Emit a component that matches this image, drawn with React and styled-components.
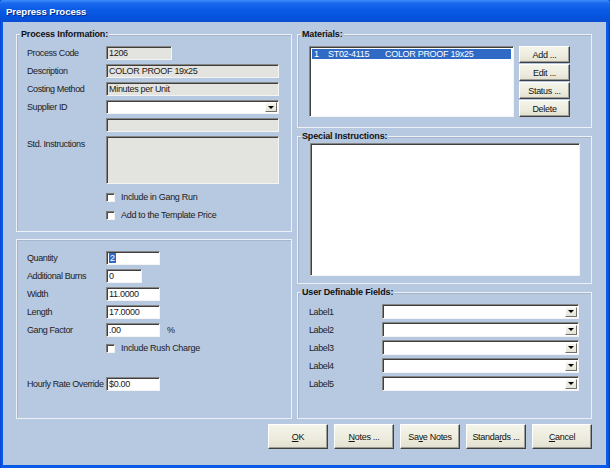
import React from 'react';
import styled, { createGlobalStyle } from 'styled-components';

const GlobalStyle = createGlobalStyle`
  html, body {
    margin: 0;
    padding: 0;
    background: #ffffff;
  }
  body {
    font-family: "Liberation Sans", Arial, sans-serif;
  }
`;

const Window = styled.div`
  width: 610px;
  height: 468px;
  display: flex;
  flex-direction: column;
  background: linear-gradient(90deg, #0842d0 0%, #0a5ae8 2px, #0a5ae8 calc(100% - 2px), #0638b8 100%);
  box-sizing: border-box;
  overflow: hidden;
`;

const TitleBar = styled.div`
  height: 22px;
  flex: none;
  display: flex;
  align-items: center;
  padding-left: 6px;
  background: linear-gradient(180deg, #3d8ef8 0%, #1a68ee 15%, #0a5ae6 45%, #0553dc 80%, #0a4fd2 100%);
  border-radius: 3px 3px 0 0;
`;

const Title = styled.span`
  color: #ffffff;
  font-weight: bold;
  font-size: 9.6px;
  letter-spacing: -0.05px;
  text-shadow: 1px 1px 0 #0a2a88;
`;

const Body = styled.div`
  flex: 1;
  margin: 0 4px 3px 3px;
  padding: 12px 14px 0 13px;
  background: #b7c8e1;
  display: flex;
  flex-direction: column;
`;

const Columns = styled.div`
  display: flex;
  gap: 5px;
`;

const Column = styled.div`
  width: ${(p) => p.$width}px;
  display: flex;
  flex-direction: column;
  gap: ${(p) => p.$gap}px;
`;

const Group = styled.div`
  position: relative;
  height: ${(p) => p.$height}px;
  box-sizing: border-box;
  border: 1px solid #edf0f4;
  box-shadow: inset 1px 1px 0 #a6b5cc;
  padding: ${(p) => p.$pad || '11px 12px 0 10px'};
`;

const Legend = styled.span`
  position: absolute;
  top: -6px;
  left: 3px;
  padding: 0 1px;
  background: #b7c8e1;
  font-size: 9px;
  line-height: 11px;
  font-weight: bold;
  letter-spacing: -0.15px;
  color: #111;
`;

const Rows = styled.div`
  display: flex;
  flex-direction: column;
  gap: ${(p) => p.$gap || 4}px;
`;

const Row = styled.div`
  display: flex;
  align-items: ${(p) => (p.$top ? 'flex-start' : 'center')};
  height: ${(p) => p.$h || 14}px;
  margin-top: ${(p) => p.$mt || 0}px;
`;

const Label = styled.span`
  width: ${(p) => p.$w || 79}px;
  flex: none;
  font-size: 9px;
  letter-spacing: -0.4px;
  color: #222;
  white-space: nowrap;
  padding-top: ${(p) => (p.$top ? 3 : 0)}px;
`;

const Field = styled.div`
  box-sizing: border-box;
  width: ${(p) => (p.$w ? `${p.$w}px` : 'auto')};
  flex: ${(p) => (p.$w ? 'none' : '1')};
  height: ${(p) => p.$h || 14}px;
  background: ${(p) => (p.$disabled ? '#e3e3df' : '#ffffff')};
  border-top: 1px solid #868686;
  border-left: 1px solid #868686;
  border-bottom: 1px solid #f4f4f4;
  border-right: 1px solid #f4f4f4;
  box-shadow: inset 1px 1px 0 #3f3f3f;
  display: flex;
  align-items: ${(p) => (p.$multi ? 'flex-start' : 'center')};
  padding-left: 2px;
  font-size: 9px;
  letter-spacing: -0.3px;
  color: #1a1a1a;
  white-space: nowrap;
  overflow: hidden;
`;

const Selected = styled.span`
  background: #316ac5;
  color: #ffffff;
  padding: 0 1px;
`;

const DropButton = styled.div`
  margin-left: auto;
  width: 12px;
  height: 10px;
  flex: none;
  margin-right: 1px;
  box-sizing: border-box;
  background: linear-gradient(180deg, #f6f5ee 0%, #e6e4d6 100%);
  border-top: 1px solid #ffffff;
  border-left: 1px solid #ffffff;
  border-right: 1px solid #6f6f6f;
  border-bottom: 1px solid #6f6f6f;
  display: flex;
  align-items: center;
  justify-content: center;
`;

const Arrow = styled.div`
  width: 0;
  height: 0;
  border-left: 3px solid transparent;
  border-right: 3px solid transparent;
  border-top: 3px solid #000;
`;

const CheckRow = styled.label`
  display: flex;
  align-items: center;
  gap: 6px;
  margin-left: 79px;
  height: 14px;
  margin-top: ${(p) => p.$mt || 0}px;
  font-size: 9px;
  letter-spacing: -0.3px;
  color: #222;
`;

const CheckBox = styled.span`
  width: 9px;
  height: 9px;
  box-sizing: border-box;
  background: #ffffff;
  border-top: 1px solid #7a7a7a;
  border-left: 1px solid #7a7a7a;
  border-bottom: 1px solid #f2f2f2;
  border-right: 1px solid #f2f2f2;
  box-shadow: inset 1px 1px 0 #4a4a4a;
`;

const Suffix = styled.span`
  margin-left: 7px;
  font-size: 9px;
  color: #222;
`;

const Spacer = styled.div`
  height: ${(p) => p.$h}px;
`;

const MaterialsBody = styled.div`
  display: flex;
  gap: 5px;
`;

const ListBox = styled.div`
  width: 205px;
  height: 71px;
  box-sizing: border-box;
  background: #ffffff;
  border-top: 1px solid #868686;
  border-left: 1px solid #868686;
  border-bottom: 1px solid #f4f4f4;
  border-right: 1px solid #f4f4f4;
  box-shadow: inset 1px 1px 0 #3f3f3f;
  padding: 2px 2px 0 2px;
`;

const ListRow = styled.div`
  height: 10px;
  display: flex;
  align-items: center;
  background: ${(p) => (p.$selected ? '#316ac5' : 'transparent')};
  color: ${(p) => (p.$selected ? '#ffffff' : '#1a1a1a')};
  font-size: 9px;
  letter-spacing: -0.3px;
  white-space: nowrap;
`;

const Cell = styled.span`
  width: ${(p) => p.$w}px;
  flex: none;
  padding-left: ${(p) => p.$pl || 0}px;
`;

const SideButtons = styled.div`
  display: flex;
  flex-direction: column;
  gap: 1px;
`;

const Button = styled.button`
  box-sizing: border-box;
  width: ${(p) => p.$w}px;
  height: ${(p) => p.$h}px;
  padding: 0;
  margin: 0;
  background: linear-gradient(180deg, #f5f4ea 0%, #ecebdd 60%, #e2e0d0 100%);
  border-top: 1px solid #ffffff;
  border-left: 1px solid #ffffff;
  border-right: 1px solid #404040;
  border-bottom: 1px solid #404040;
  box-shadow: inset -1px -1px 0 #9d9d96;
  font-family: "Liberation Sans", Arial, sans-serif;
  font-size: 9px;
  letter-spacing: -0.3px;
  color: #111;
  cursor: default;
`;

const TextArea = styled.div`
  box-sizing: border-box;
  height: 133px;
  background: #ffffff;
  border-top: 1px solid #868686;
  border-left: 1px solid #868686;
  border-bottom: 1px solid #f4f4f4;
  border-right: 1px solid #f4f4f4;
  box-shadow: inset 1px 1px 0 #3f3f3f;
`;

const ButtonBar = styled.div`
  display: flex;
  justify-content: flex-end;
  gap: 6px;
  margin-top: 5px;
`;

function Combo({ w, h }) {
  return (
    <Field $w={w} $h={h}>
      <DropButton>
        <Arrow />
      </DropButton>
    </Field>
  );
}

const udfLabels = ['Label1', 'Label2', 'Label3', 'Label4', 'Label5'];

export default function App() {
  return (
    <>
      <GlobalStyle />
      <Window>
        <TitleBar>
          <Title>Prepress Process</Title>
        </TitleBar>
        <Body>
          <Columns>
            <Column $width={276} $gap={7}>
              <Group $height={198}>
                <Legend>Process Information:</Legend>
                <Rows>
                  <Row>
                    <Label>Process Code</Label>
                    <Field $w={66} $disabled>1206</Field>
                  </Row>
                  <Row>
                    <Label>Description</Label>
                    <Field $disabled>COLOR PROOF 19x25</Field>
                  </Row>
                  <Row>
                    <Label>Costing Method</Label>
                    <Field $disabled>Minutes per Unit</Field>
                  </Row>
                  <Row>
                    <Label>Supplier ID</Label>
                    <Combo />
                  </Row>
                  <Row>
                    <Label />
                    <Field $disabled />
                  </Row>
                  <Row $h={48} $top>
                    <Label $top>Std. Instructions</Label>
                    <Field $disabled $multi $h={48} />
                  </Row>
                  <CheckRow $mt={2}>
                    <CheckBox />
                    Include in Gang Run
                  </CheckRow>
                  <CheckRow>
                    <CheckBox />
                    Add to the Template Price
                  </CheckRow>
                </Rows>
              </Group>
              <Group $height={180}>
                <Rows>
                  <Row>
                    <Label>Quantity</Label>
                    <Field $w={54}>
                      <Selected>2</Selected>
                    </Field>
                  </Row>
                  <Row>
                    <Label>Additional Burns</Label>
                    <Field $w={36}>0</Field>
                  </Row>
                  <Row>
                    <Label>Width</Label>
                    <Field $w={54}>11.0000</Field>
                  </Row>
                  <Row>
                    <Label>Length</Label>
                    <Field $w={54}>17.0000</Field>
                  </Row>
                  <Row>
                    <Label>Gang Factor</Label>
                    <Field $w={54}>.00</Field>
                    <Suffix>%</Suffix>
                  </Row>
                  <CheckRow>
                    <CheckBox />
                    Include Rush Charge
                  </CheckRow>
                  <Spacer $h={14} />
                  <Row>
                    <Label>Hourly Rate Override</Label>
                    <Field $w={54}>$0.00</Field>
                  </Row>
                </Rows>
              </Group>
            </Column>
            <Column $width={295} $gap={8}>
              <Group $height={94} $pad="11px 12px 0 11px">
                <Legend>Materials:</Legend>
                <MaterialsBody>
                  <ListBox>
                    <ListRow $selected>
                      <Cell $w={14} $pl={2}>1</Cell>
                      <Cell $w={57}>ST02-4115</Cell>
                      <Cell>COLOR PROOF 19x25</Cell>
                    </ListRow>
                  </ListBox>
                  <SideButtons>
                    <Button $w={51} $h={17}>Add ...</Button>
                    <Button $w={51} $h={17}>Edit ...</Button>
                    <Button $w={51} $h={17}>Status ...</Button>
                    <Button $w={51} $h={17}>Delete</Button>
                  </SideButtons>
                </MaterialsBody>
              </Group>
              <Group $height={148} $pad="6px 11px 0 12px">
                <Legend>Special Instructions:</Legend>
                <TextArea />
              </Group>
              <Group $height={127} $pad="11px 12px 0 11px">
                <Legend>User Definable Fields:</Legend>
                <Rows $gap={3}>
                  {udfLabels.map((l) => (
                    <Row key={l} $h={15}>
                      <Label $w={73}>{l}</Label>
                      <Combo h={15} />
                    </Row>
                  ))}
                </Rows>
              </Group>
            </Column>
          </Columns>
          <ButtonBar>
            <Button $w={60} $h={25}><u>O</u>K</Button>
            <Button $w={60} $h={25}><u>N</u>otes ...</Button>
            <Button $w={60} $h={25}>Sa<u>v</u>e Notes</Button>
            <Button $w={60} $h={25}>Standa<u>r</u>ds ...</Button>
            <Button $w={60} $h={25}><u>C</u>ancel</Button>
          </ButtonBar>
        </Body>
      </Window>
    </>
  );
}
